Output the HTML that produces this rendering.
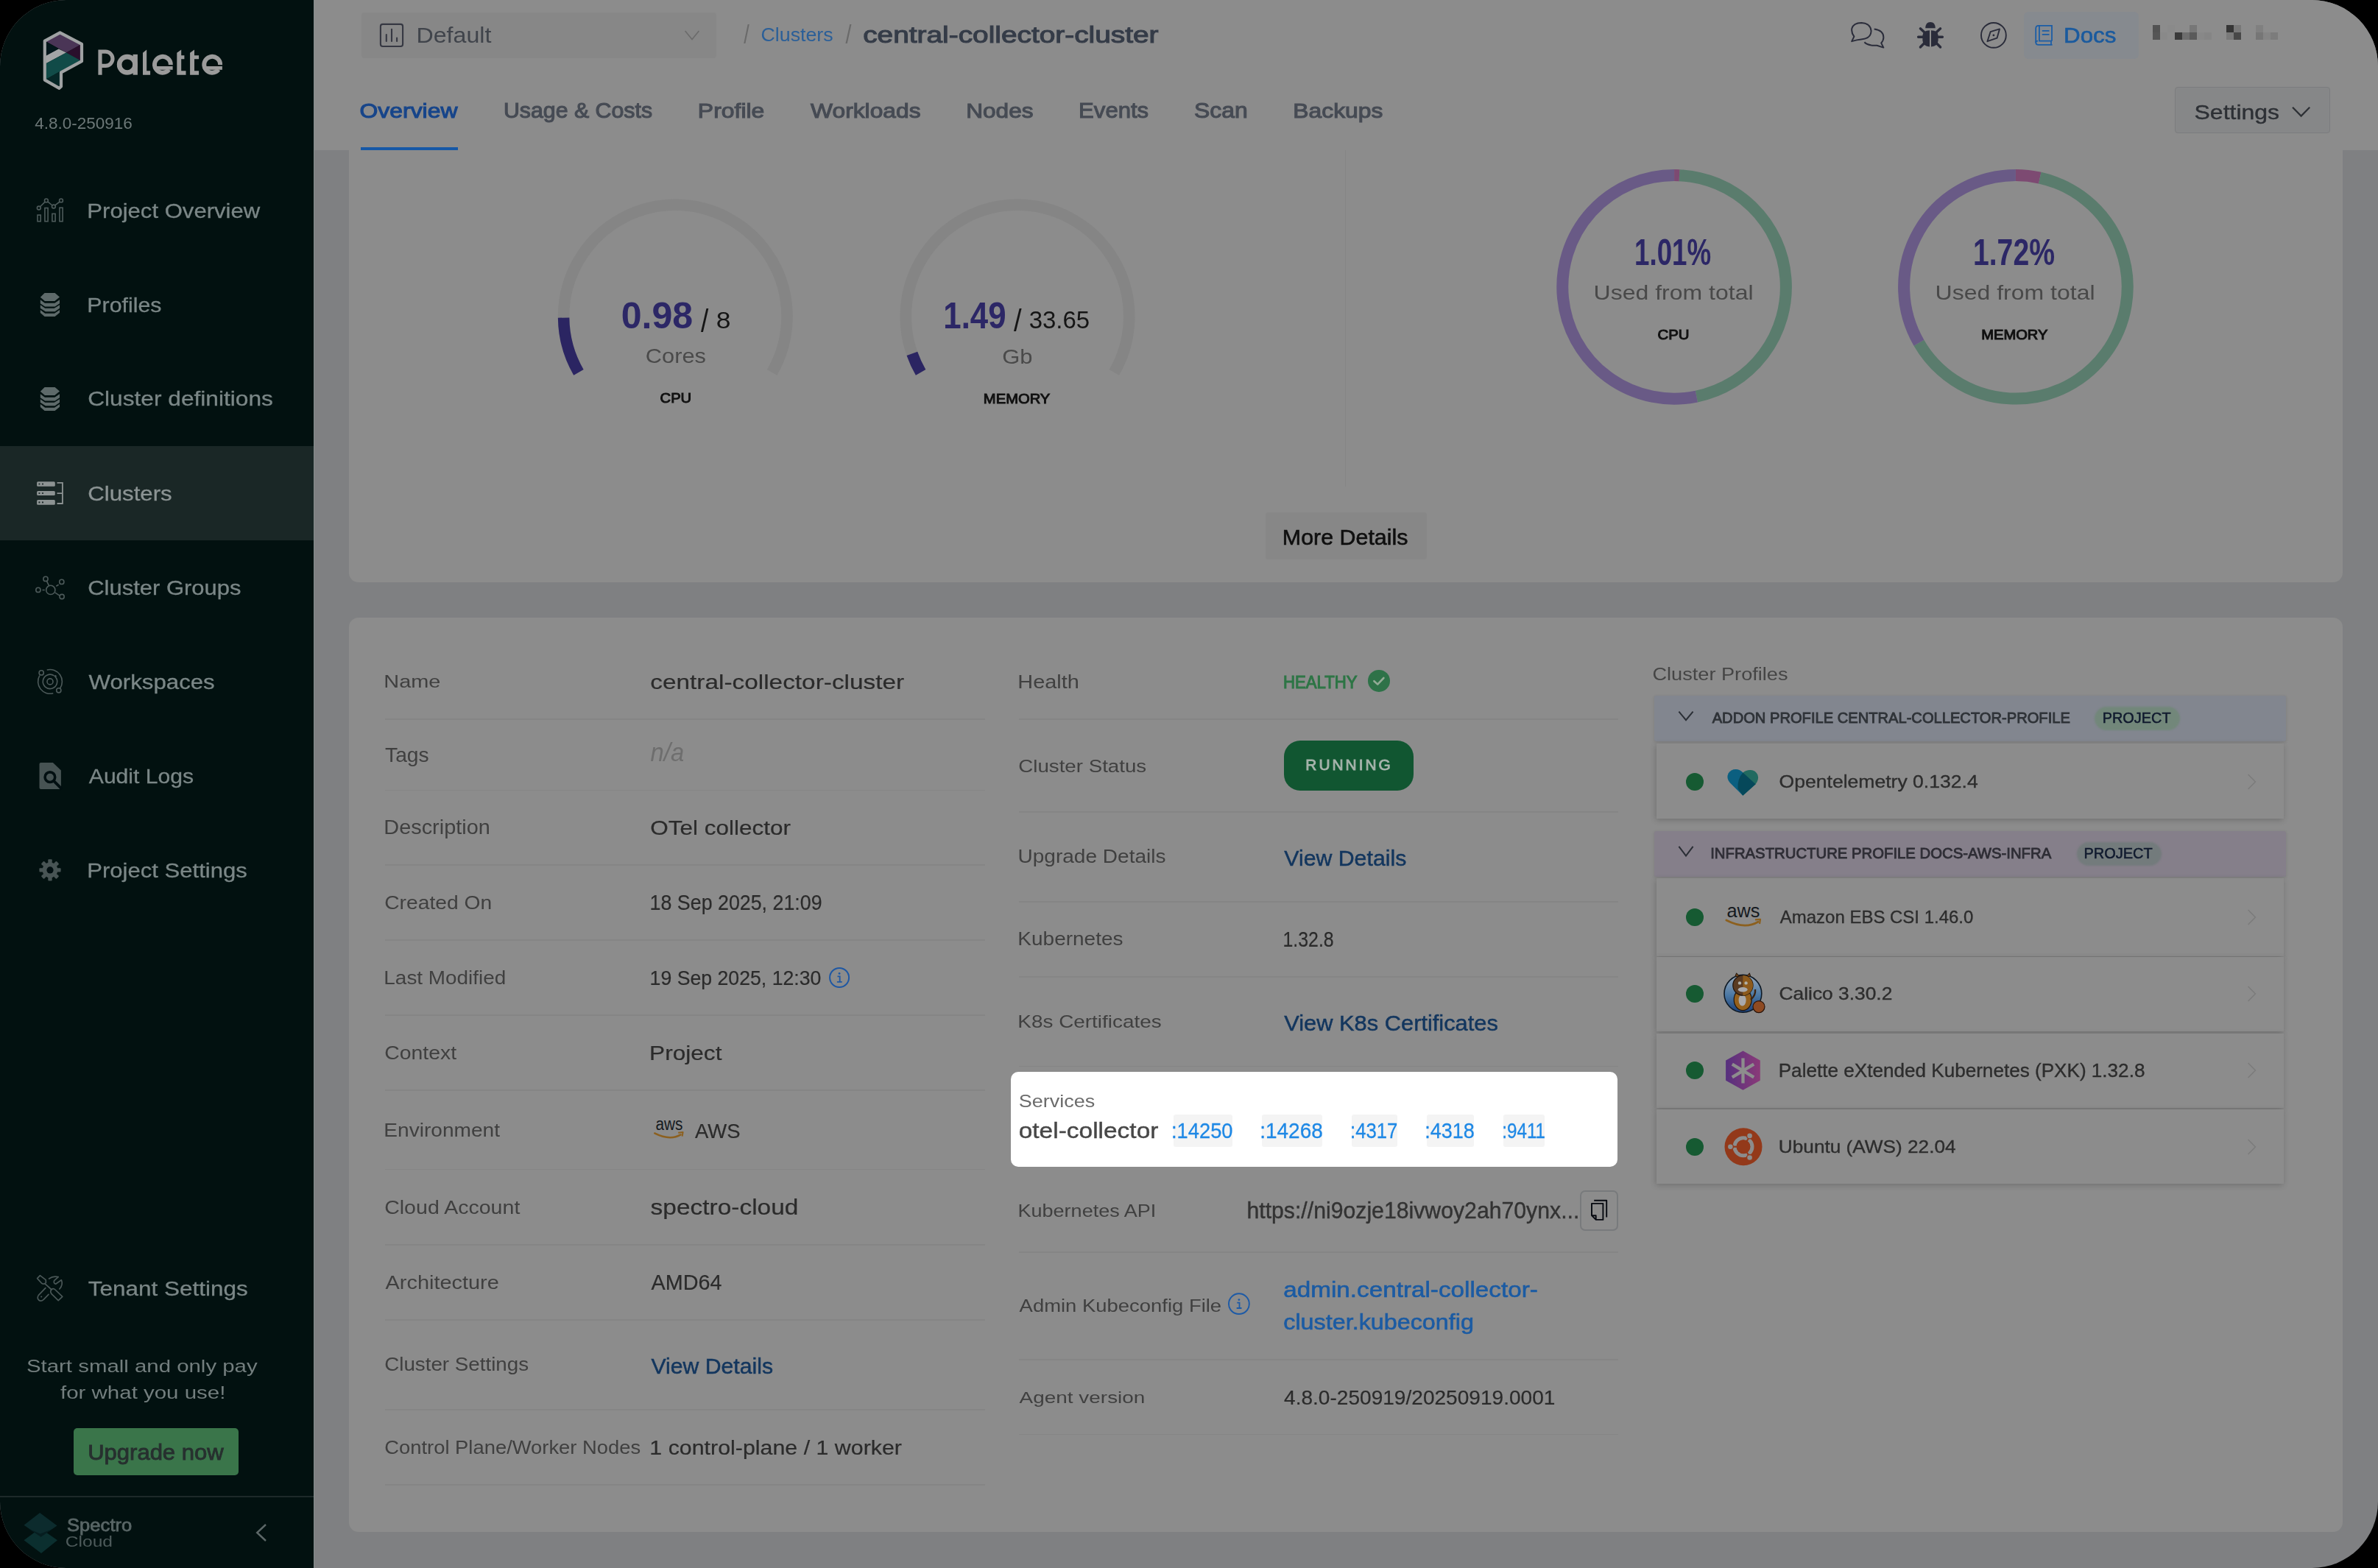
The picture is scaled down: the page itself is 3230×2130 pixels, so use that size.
<!DOCTYPE html>
<html><head><meta charset="utf-8"><title>Palette - central-collector-cluster</title>
<style>
html,body{margin:0;padding:0;background:#000;width:3230px;height:2130px;overflow:hidden}
*{box-sizing:border-box}
#app{position:absolute;left:0;top:0;width:3230px;height:2130px;border-radius:90px;overflow:hidden;background:#7f8082;font-family:"Liberation Sans",sans-serif}
.a{position:absolute}
#sidebar{left:0;top:0;width:426px;height:2130px;background:#021110}
#active{left:0;top:606px;width:426px;height:128px;background:#1a2726}
#sbedge{left:426px;top:0;width:1px;height:2130px;background:#868d8d;z-index:3}
#sep{left:0;top:2032px;width:426px;height:2px;background:#1d2929}
#upgrade{left:100px;top:1940px;width:224px;height:64px;border-radius:5px;background:#3a754a}
#header{left:426px;top:0;width:2804px;height:204px;background:#8c8c8c}
#project{left:491px;top:17px;width:482px;height:62px;border-radius:4px;background:#878787}
#tabline{left:490px;top:200px;width:132px;height:4px;background:#1658a6}
#docs{left:2749px;top:16px;width:156px;height:64px;border-radius:6px;background:#868a8f}
#settings{left:2954px;top:118px;width:211px;height:63px;border-radius:4px;background:#868788;border:1.5px solid #7b7c7e}
#card1{left:474px;top:180px;width:2708px;height:611px;border-radius:0 0 13px 13px;background:#8c8c8c}
#divider{left:1826.5px;top:204px;width:1px;height:457px;background:#858585}
#moredet{left:1718.5px;top:696px;width:219px;height:64px;border-radius:4px;background:#878787}
#card2{left:474px;top:839px;width:2708px;height:1242px;border-radius:13px;background:#8c8c8c}
.ln{position:absolute;height:1.5px;background:#858585}
#services{left:1373px;top:1456px;width:824px;height:128.5px;border-radius:10px;background:#fff}
.port{position:absolute;top:1514px;height:43.5px;background:#f4f4f4;border-radius:3px}
#copy{left:2146px;top:1616.5px;width:51.5px;height:55px;border-radius:7px;border:2px solid #787a7c}
#pill{left:1744px;top:1006px;width:176px;height:68px;border-radius:22px;background:#115631}
.phead{position:absolute;left:2247px;width:858px;height:62px;border-radius:3px;box-shadow:0 1px 4px rgba(0,0,0,0.12)}
.prow{position:absolute;left:2250px;width:852px;background:#8c8c8c;box-shadow:-1px 2px 8px rgba(0,0,0,0.2)}
.pproj{position:absolute;height:32px;border-radius:16px;filter:blur(1.2px)}
.dot{position:absolute;left:2290px;width:24px;height:24px;border-radius:50%;background:#165a32}
svg{position:absolute;left:0;top:0}
</style></head>
<body>
<div id="app">
  <div id="sidebar" class="a"></div>
  <div id="active" class="a"></div>
  <div id="sep" class="a"></div>
  <div id="upgrade" class="a"></div>
  <div id="sbedge" class="a"></div>

  <div id="card1" class="a"></div>
  <div id="header" class="a"></div>
  <div id="project" class="a"></div>
  <div id="tabline" class="a"></div>
  <div id="docs" class="a"></div>
  <div id="settings" class="a"></div>
  <div id="divider" class="a"></div>
  <div id="moredet" class="a"></div>

  <div id="card2" class="a"></div>
  <div class="ln" style="left:523px;top:976.25px;width:815px"></div>
<div class="ln" style="left:523px;top:1072.55px;width:815px"></div>
<div class="ln" style="left:523px;top:1174.25px;width:815px"></div>
<div class="ln" style="left:523px;top:1276.25px;width:815px"></div>
<div class="ln" style="left:523px;top:1378.45px;width:815px"></div>
<div class="ln" style="left:523px;top:1480.25px;width:815px"></div>
<div class="ln" style="left:523px;top:1587.95px;width:815px"></div>
<div class="ln" style="left:523px;top:1690.05px;width:815px"></div>
<div class="ln" style="left:523px;top:1792.25px;width:815px"></div>
<div class="ln" style="left:523px;top:1914.25px;width:815px"></div>
<div class="ln" style="left:523px;top:2016.25px;width:815px"></div>
<div class="ln" style="left:1384px;top:976.25px;width:814px"></div>
<div class="ln" style="left:1384px;top:1102.45px;width:814px"></div>
<div class="ln" style="left:1384px;top:1224.25px;width:814px"></div>
<div class="ln" style="left:1384px;top:1326.25px;width:814px"></div>
<div class="ln" style="left:1384px;top:1447.55px;width:814px"></div>
<div class="ln" style="left:1384px;top:1700.05px;width:814px"></div>
<div class="ln" style="left:1384px;top:1846.25px;width:814px"></div>
<div class="ln" style="left:1384px;top:1947.95px;width:814px"></div>
  <div id="pill" class="a"></div>

  <div class="phead" style="top:945px;background:#82868f"></div>
  <div class="pproj" style="left:2844.5px;top:959.5px;width:116px;background:#72877a"></div>
  <div class="prow" style="top:1009.5px;height:102px"></div>
  <div class="phead" style="top:1128.5px;background:#857f8a"></div>
  <div class="pproj" style="left:2820.5px;top:1143.5px;width:115px;background:#737b7c"></div>
  <div class="prow" style="top:1192.5px;height:106px"></div>
  <div class="prow" style="top:1300px;height:101px"></div>
  <div class="prow" style="top:1403.5px;height:101.5px"></div>
  <div class="prow" style="top:1507px;height:101px"></div>
  <div class="dot" style="top:1050px"></div>
  <div class="dot" style="top:1234px"></div>
  <div class="dot" style="top:1338px"></div>
  <div class="dot" style="top:1442px"></div>
  <div class="dot" style="top:1546px"></div>

  <div id="services" class="a"></div>
  <div class="port" style="left:1593.5px;width:80px"></div>
  <div class="port" style="left:1713.8px;width:82px"></div>
  <div class="port" style="left:1835.5px;width:62.5px"></div>
  <div class="port" style="left:1937.6px;width:64px"></div>
  <div class="port" style="left:2042.4px;width:55.5px"></div>
  <div id="copy" class="a"></div>

  <svg width="3230" height="2130" viewBox="0 0 3230 2130">
  <path d="M785.92,505.85 A151.7,151.7 0 1 1 1048.68,505.85" fill="none" stroke="#858585" stroke-width="15.5"/>
<path d="M785.92,505.85 A151.7,151.7 0 0 1 765.61,431.59" fill="none" stroke="#2b2562" stroke-width="15.5"/>
<path d="M1250.62,505.85 A151.7,151.7 0 1 1 1513.38,505.85" fill="none" stroke="#858585" stroke-width="15.5"/>
<path d="M1250.62,505.85 A151.7,151.7 0 0 1 1238.89,480.32" fill="none" stroke="#2b2562" stroke-width="15.5"/>
<path d="M2280.99,238.16 A151.8,151.8 0 0 1 2304.36,538.55" fill="none" stroke="#5a7c6d" stroke-width="16"/>
<path d="M2304.36,538.55 A151.8,151.8 0 1 1 2274.10,238.00" fill="none" stroke="#695a86" stroke-width="16"/>
<path d="M2274.10,238.00 A151.8,151.8 0 0 1 2280.99,238.16" fill="none" stroke="#7d4a72" stroke-width="16"/>
<path d="M2737.90,238.00 A151.8,151.8 0 0 1 2770.76,241.60" fill="none" stroke="#7d4a72" stroke-width="16"/>
<path d="M2770.76,241.60 A151.8,151.8 0 1 1 2606.44,465.70" fill="none" stroke="#5a7c6d" stroke-width="16"/>
<path d="M2606.44,465.70 A151.8,151.8 0 0 1 2737.90,238.00" fill="none" stroke="#695a86" stroke-width="16"/>
<g><polygon points="62,56 81.5,46 109,61 90,71.4" fill="#4a3556"/><polygon points="90,71.4 109,61 109,83 " fill="#2a0f2c"/><polygon points="62,57 79.7,66.5 62,76" fill="#03171b"/><polygon points="62,76 79.7,66.5 90,71.4 62,86.5" fill="#a3a5a6"/><polygon points="62,86.5 90,71.4 109,82 82.5,96.5 62,108" fill="#114b48"/><polygon points="62,108 82.5,96.5 82.5,118 " fill="#062626"/><path d="M81.5,44.3 L60.8,55.6 L60.8,108.6 L80.5,119.8 L83,117.5 L83,98.3 L111,83.2 L111,59.8 Z" fill="none" stroke="#9fa2a3" stroke-width="4.2" stroke-linejoin="round"/></g>
<g fill="none" stroke="#4d5a5a" stroke-width="1.6"><rect x="51" y="292.1" width="4.2" height="8.6"/><rect x="60.9" y="282.5" width="4.2" height="18.2"/><rect x="70.9" y="290.4" width="4.2" height="10.3"/><rect x="80.9" y="282.2" width="4.2" height="18.5"/><circle cx="52.8" cy="282.5" r="2.4"/><circle cx="62.9" cy="272.4" r="2.4"/><circle cx="72.9" cy="280.5" r="2.4"/><circle cx="83" cy="272.4" r="2.4"/><path d="M54.5,280.8 L61.2,274.1 M64.8,273.9 L71,279 M74.7,278.9 L81.2,274"/></g>
<g fill="#5e6a6a" transform="translate(0,0)"><polygon points="54.8,403.7 60.6,398 74.6,398 81,403.4 74.3,409.1 60.9,409.1"/><polygon points="54.8,407.2 60.9,411.7 74.3,411.7 81,407.2 81,412.3 74.6,416.5 61.2,416.5 54.8,412.3"/><polygon points="54.8,414.2 61.2,418.7 73.7,418.7 81,414.2 81,418.7 74.6,423.2 61.9,423.2 54.8,418.7"/><polygon points="54.8,420.9 61.2,425.7 74,425.7 81,420.9 81,424.8 74.6,429.9 60.6,429.9 54.8,425.1"/></g>
<g fill="#5e6a6a" transform="translate(0,128)"><polygon points="54.8,403.7 60.6,398 74.6,398 81,403.4 74.3,409.1 60.9,409.1"/><polygon points="54.8,407.2 60.9,411.7 74.3,411.7 81,407.2 81,412.3 74.6,416.5 61.2,416.5 54.8,412.3"/><polygon points="54.8,414.2 61.2,418.7 73.7,418.7 81,414.2 81,418.7 74.6,423.2 61.9,423.2 54.8,418.7"/><polygon points="54.8,420.9 61.2,425.7 74,425.7 81,420.9 81,424.8 74.6,429.9 60.6,429.9 54.8,425.1"/></g>
<g><rect x="50.1" y="654.2" width="24.7" height="6.6" rx="1.5" fill="#8d9393"/><rect x="50.1" y="667" width="24.7" height="5.9" rx="1.5" fill="#8d9393"/><rect x="50.1" y="679.1" width="24.7" height="6.6" rx="1.5" fill="#8d9393"/><g fill="#1a2627"><circle cx="53.4" cy="657.5" r="1.1"/><circle cx="58" cy="657.5" r="1.1"/><circle cx="53.4" cy="670" r="1.1"/><circle cx="58" cy="670" r="1.1"/><circle cx="53.4" cy="682.4" r="1.1"/><circle cx="58" cy="682.4" r="1.1"/></g><path d="M77.5,655.8 H84.9 V684 H77.5 M77.5,670.2 H84.9" fill="none" stroke="#8d9393" stroke-width="1.8"/></g>
<g fill="none" stroke="#4d5a5a" stroke-width="1.6"><circle cx="68.8" cy="801.4" r="6.1"/><circle cx="62" cy="786.4" r="3.1"/><circle cx="83.8" cy="790.4" r="3.1"/><circle cx="51.9" cy="801.4" r="3.1"/><circle cx="84.1" cy="810.5" r="3.1"/><path d="M63.6,789.7 L66.4,795.3 M57.5,801.5 H60.8 M76.3,796.2 L79.6,794.2 M74.6,804.9 L81,809.1"/></g>
<g fill="none" stroke="#4d5a5a" stroke-width="1.6"><path d="M63.76,910.06 A16.4,16.4 0 0 1 81.43,935.31"/><path d="M72.24,941.74 A16.4,16.4 0 0 1 53.80,917.70"/><path d="M75.43,919.66 A9.7,9.7 0 1 1 73.56,917.95"/><circle cx="68" cy="925.9" r="4"/><circle cx="56.2" cy="913.9" r="3.1"/><circle cx="79.8" cy="937.8" r="3.1"/></g><circle cx="75.2" cy="918.5" r="1.6" fill="#4d5a5a"/>
<g><path d="M55.5,1036.1 H71.9 L82.9,1046.5 V1069.9 Q82.9,1071.9 80.9,1071.9 H55.5 Q53.5,1071.9 53.5,1069.9 V1038.1 Q53.5,1036.1 55.5,1036.1 Z" fill="#475353"/><circle cx="67.9" cy="1055.7" r="6.8" fill="none" stroke="#020f11" stroke-width="3.6"/><path d="M72.8,1060.6 L84,1071.8" stroke="#020f11" stroke-width="3.8"/></g>
<g fill="#485454"><rect x="65.30" y="1167.30" width="5.4" height="6.20" rx="1" transform="rotate(0.0 68 1181.9)"/><rect x="65.30" y="1167.30" width="5.4" height="6.20" rx="1" transform="rotate(45.0 68 1181.9)"/><rect x="65.30" y="1167.30" width="5.4" height="6.20" rx="1" transform="rotate(90.0 68 1181.9)"/><rect x="65.30" y="1167.30" width="5.4" height="6.20" rx="1" transform="rotate(135.0 68 1181.9)"/><rect x="65.30" y="1167.30" width="5.4" height="6.20" rx="1" transform="rotate(180.0 68 1181.9)"/><rect x="65.30" y="1167.30" width="5.4" height="6.20" rx="1" transform="rotate(225.0 68 1181.9)"/><rect x="65.30" y="1167.30" width="5.4" height="6.20" rx="1" transform="rotate(270.0 68 1181.9)"/><rect x="65.30" y="1167.30" width="5.4" height="6.20" rx="1" transform="rotate(315.0 68 1181.9)"/><circle cx="68" cy="1181.9" r="10.4"/></g><circle cx="68" cy="1181.9" r="4.6" fill="#020f11"/>
<g fill="none" stroke="#4a5757" stroke-width="1.7" stroke-linejoin="round" stroke-linecap="round"><path d="M50.6,1736.6 L54.4,1732.6 L62.2,1738.6 L62.4,1742.4 Q61,1744.6 58.2,1744 L56.6,1743.2 Z"/><path d="M60.8,1743.6 L70.2,1752"/><path d="M69.8,1751.6 Q72.4,1749.4 75,1752 L84.8,1761.4 L79.2,1766.6 L70,1757.6 Q67.6,1754.6 69.8,1751.6 Z"/><path d="M66.6,1737 Q72,1732.8 79.2,1734.6 L73.6,1739.6 Q72.4,1743.2 75.6,1744.2 L83.4,1738.8 Q86,1745.4 80.8,1751"/><path d="M61.8,1749.6 L52.4,1759.4 Q49.8,1763.4 52.6,1766 Q55.6,1768.6 59.2,1765.4 L66,1758.4"/></g><circle cx="56.2" cy="1761.5" r="1.1" fill="#4a5757"/>
<g><polygon points="32.5,2092.2 54.5,2076 78,2092.2 56,2110" fill="#0b2f2f"/><polygon points="32.5,2071.8 54.1,2055.1 77.5,2072.6 55.6,2087.7" fill="#0c2b2d"/><polygon points="39,2076.8 55.6,2087.7 70.5,2077.5 54.6,2083.4" fill="#061e20"/></g>
<path d="M361,2071 L349.2,2082 L361,2093" fill="none" stroke="#5d6868" stroke-width="2.4"/>
<g fill="none" stroke="#363842" stroke-width="2.1" stroke-linecap="round"><rect x="516.9" y="32.9" width="30.2" height="30.1" rx="3"/><path d="M524.8,47 V56 M532,39.7 V56 M539.1,51.6 V56"/></g>
<path d="M930.6,42 L940,53.6 L949.4,42" fill="none" stroke="#6b6b6b" stroke-width="1.6"/>
<g fill="none" stroke="#2a2c3a" stroke-width="2" stroke-linejoin="round"><path d="M2518.4,49.6 Q2514.3,44 2515.4,38.6 Q2517.4,31 2528.4,30.9 Q2540.6,31.4 2541.6,42 Q2541.4,52.6 2528,53.4 Q2522.6,53.8 2515.2,56.1 Z"/><path d="M2545.7,39.6 Q2558.3,41.2 2558.4,51 Q2558.2,55.4 2555.2,58.4 L2558.3,64.6 L2549.4,61.7 Q2537.4,62.4 2532.4,57.3"/></g>
<g fill="#2a2c3a"><path d="M2615.2,38.3 Q2615.4,29.9 2622,29.9 Q2628.6,29.9 2628.8,38.3 Z"/><path d="M2611.4,48 Q2612,41.2 2621,41.2 L2621,63.4 Q2612.2,63.4 2611.4,55 Z"/><path d="M2632.6,48 Q2632,41.2 2623,41.2 L2623,63.4 Q2631.8,63.4 2632.6,55 Z"/></g><g stroke="#2a2c3a" stroke-width="3.4" stroke-linecap="round"><path d="M2608.4,38.8 L2614,44 M2605.6,50.2 H2611.6 M2608.4,64 L2613.6,58.8 M2635.6,38.8 L2630,44 M2638.4,50.2 H2632.4 M2635.6,64 L2630.4,58.8"/></g>
<g fill="none" stroke="#2a2c3a" stroke-width="1.9" stroke-linejoin="round"><circle cx="2707.9" cy="47.9" r="16.9"/><path d="M2716,39.4 L2712.6,51.6 L2699.4,56.2 L2703.6,43.2 Z"/></g><circle cx="2707.9" cy="47.9" r="1.4" fill="#2a2c3a"/>
<g fill="none" stroke="#1b5da6" stroke-width="1.8"><path d="M2787,55.7 V34.8 H2769 Q2765.2,34.8 2765.2,38.6 V57.2 Q2765.2,60.9 2769,60.9 H2787.6"/><path d="M2769.9,34.8 V55.7 H2787 M2765.2,57.8 Q2765.2,55.7 2768,55.7 M2786,55.7 V60.9"/><path d="M2773.8,41.8 H2783.5 M2773.8,46.9 H2783.5"/></g>
<g><rect x="2924" y="34" width="10" height="10" fill="#525252"/><rect x="2944" y="34" width="10" height="10" fill="#8a8a8a"/><rect x="2974" y="34" width="10" height="10" fill="#777777"/><rect x="3024" y="34" width="10" height="10" fill="#363636"/><rect x="3034" y="34" width="10" height="10" fill="#787878"/><rect x="3064" y="34" width="10" height="10" fill="#808080"/><rect x="2924" y="44" width="10" height="10" fill="#555555"/><rect x="2934" y="44" width="10" height="10" fill="#898989"/><rect x="2954" y="44" width="10" height="10" fill="#3a3a3a"/><rect x="2964" y="44" width="10" height="10" fill="#6e6e6e"/><rect x="2974" y="44" width="10" height="10" fill="#5a5a5a"/><rect x="2984" y="44" width="10" height="10" fill="#888888"/><rect x="2994" y="44" width="10" height="10" fill="#858585"/><rect x="3024" y="44" width="10" height="10" fill="#7a7a7a"/><rect x="3034" y="44" width="10" height="10" fill="#484848"/><rect x="3064" y="44" width="10" height="10" fill="#767676"/><rect x="3074" y="44" width="10" height="10" fill="#858585"/><rect x="3084" y="44" width="10" height="10" fill="#7c7c7c"/></g>
<path d="M3114,145.8 L3125.6,157.6 L3137.2,145.8" fill="none" stroke="#2d3035" stroke-width="2.3"/>
<g><circle cx="1140.1" cy="1328" r="13" fill="none" stroke="#1e57a3" stroke-width="2"/><circle cx="1140.1" cy="1322.4" r="1.4" fill="#1e57a3"/><path d="M1137.5,1326.4 H1140.6999999999998 V1333.6 M1136.8999999999999,1333.8 H1143.6999999999998" fill="none" stroke="#1e57a3" stroke-width="1.8"/></g>
<g><circle cx="1682.9" cy="1771.2" r="13.9" fill="none" stroke="#1d5aa6" stroke-width="2"/><circle cx="1682.9" cy="1765.6000000000001" r="1.4" fill="#1d5aa6"/><path d="M1680.3000000000002,1769.6000000000001 H1683.5 V1776.8 M1679.7,1777.0 H1686.5" fill="none" stroke="#1d5aa6" stroke-width="1.8"/></g>
<text x="890.4" y="1535.2" font-family="Liberation Sans" font-size="24.15" textLength="37" lengthAdjust="spacingAndGlyphs" fill="#151a1f">aws</text>
<path d="M889.2,1539.4 Q910,1550 924.6,1541.4" fill="none" stroke="#8c601f" stroke-width="2.4" stroke-linecap="round"/><path d="M921.2,1538.8 L927.6,1538 L926.6,1543.6" fill="none" stroke="#8c601f" stroke-width="2" stroke-linejoin="round"/>
<text x="2345.4" y="1246.2" font-family="Liberation Sans" font-size="25.85" textLength="45" lengthAdjust="spacingAndGlyphs" fill="#151a1f">aws</text>
<path d="M2344.8,1250 Q2370,1263 2388,1252.2" fill="none" stroke="#8c601f" stroke-width="2.8" stroke-linecap="round"/><path d="M2384,1249.4 L2391,1248.8 L2390,1255" fill="none" stroke="#8c601f" stroke-width="2.2" stroke-linejoin="round"/>
<circle cx="1873" cy="924.9" r="15" fill="#2e7248"/><path d="M1866.4,925.2 L1871.2,929.6 L1879.4,921" fill="none" stroke="#93aa96" stroke-width="2.6" stroke-linecap="round" stroke-linejoin="round"/>
<g fill="none" stroke="#060910" stroke-width="1.9" stroke-linejoin="round"><path d="M2165.2,1630.8 H2182.2 V1653.6"/><path d="M2162,1634.9 H2177.4 V1656.9 H2167.7 L2162,1651.2 Z M2162,1651.2 H2167.7 V1656.9"/></g>
<path d="M2280.4,966.6 L2290,978.2 L2299.6,966.6" fill="none" stroke="#2a2e35" stroke-width="2"/>
<path d="M2280.4,1149.8 L2290,1162.6 L2299.6,1149.8" fill="none" stroke="#2a2e35" stroke-width="2"/>
<path d="M3053.6,1052 L3063.4,1062 L3053.6,1072" fill="none" stroke="#7b7b7b" stroke-width="1.5"/>
<path d="M3053.6,1236 L3063.4,1246 L3053.6,1256" fill="none" stroke="#7b7b7b" stroke-width="1.5"/>
<path d="M3053.6,1340 L3063.4,1350 L3053.6,1360" fill="none" stroke="#7b7b7b" stroke-width="1.5"/>
<path d="M3053.6,1444 L3063.4,1454 L3053.6,1464" fill="none" stroke="#7b7b7b" stroke-width="1.5"/>
<path d="M3053.6,1548 L3063.4,1558 L3053.6,1568" fill="none" stroke="#7b7b7b" stroke-width="1.5"/>
<g><path d="M2367.3,1080.8 L2349.5,1063 Q2344.5,1057 2347.6,1050.6 Q2351,1045 2357.6,1045 Q2363.6,1045.2 2367.5,1049.6 L2367.3,1080.8 Z" fill="#0b5f80"/><path d="M2367.5,1049.6 Q2371.4,1045.8 2377.8,1046 Q2384.6,1046.4 2387.4,1052.6 Q2389.6,1058.8 2384.6,1065.2 L2367.3,1080.8 Z" fill="#226a60"/><path d="M2367.4,1049.6 L2384.6,1065.2 L2367.3,1080.8 L2360.5,1071.6 Q2359.6,1058 2367.4,1049.6 Z" fill="#06485a"/></g>
<defs><linearGradient id="calg" x1="0" y1="0" x2="0" y2="1"><stop offset="0" stop-color="#9aa8b8"/><stop offset="0.55" stop-color="#4a78a4"/><stop offset="1" stop-color="#1b3f78"/></linearGradient><linearGradient id="pxkg" x1="0" y1="0" x2="1" y2="0"><stop offset="0" stop-color="#56307e"/><stop offset="1" stop-color="#8a3a78"/></linearGradient></defs>
<g><circle cx="2367.4" cy="1349.8" r="25.4" fill="url(#calg)" stroke="#0e1a26" stroke-width="1.6"/><path d="M2357,1326 L2358.6,1321.8 L2364,1328 Z M2377.6,1326 L2376.4,1321.8 L2371,1328 Z" fill="#6e4218" stroke="#20140c" stroke-width="1"/><ellipse cx="2367.2" cy="1358" rx="12" ry="14.6" fill="#95601c" stroke="#20140c" stroke-width="1.2"/><ellipse cx="2366.6" cy="1358.6" rx="5" ry="8" fill="#a9a9ab"/><circle cx="2367.4" cy="1338.6" r="13.6" fill="#5a3b22" stroke="#20140c" stroke-width="1.2"/><path d="M2367.4,1325 A13.6,13.6 0 0 1 2367.4,1352.2 Z" fill="#8c5a1c"/><circle cx="2363" cy="1335.4" r="2.2" fill="#b0b0a8"/><circle cx="2371.6" cy="1335.4" r="2.2" fill="#b0b0a8"/><ellipse cx="2367.2" cy="1344.2" rx="6.4" ry="3.2" fill="#a8a8aa"/><path d="M2378,1358 Q2385,1352 2384,1344" fill="none" stroke="#3a2414" stroke-width="2.4"/><circle cx="2389" cy="1367.6" r="8" fill="#8e4a22" stroke="#2a140a" stroke-width="1.2"/></g>
<g><polygon points="2367.5,1427.6 2390.8,1440.6 2390.8,1467.7 2367.5,1480.7 2344.1,1467.7 2344.1,1440.6" fill="url(#pxkg)"/><g stroke="#8d8d8d" stroke-width="4.3"><path d="M2367.5,1437.4 V1471.5"/><path d="M2352.8,1445.6 L2382.2,1463.3"/><path d="M2352.8,1463.3 L2382.2,1445.6"/></g></g>
<g><circle cx="2368" cy="1557.7" r="25.5" fill="#93391a"/><circle cx="2368" cy="1557.7" r="12" fill="none" stroke="#8c8c8c" stroke-width="5"/><g stroke="#93391a" stroke-width="2.2"><path d="M2368,1557.7 L2352,1557.7"/><path d="M2368,1557.7 L2376.5,1544"/><path d="M2368,1557.7 L2376.5,1571.5"/></g><circle cx="2368" cy="1557.7" r="9.2" fill="#93391a"/><g fill="#8c8c8c" stroke="#93391a" stroke-width="1.4"><circle cx="2350.4" cy="1557.7" r="4"/><circle cx="2376.6" cy="1542.9" r="4"/><circle cx="2376.6" cy="1572.5" r="4"/></g></g>
<g fill="#9b9b9b" stroke="none"><path d="M136,101.7 V70.2 H143.4 A9.6,9.6 0 0 1 143.4,89.4 H136" fill="none" stroke="#9b9b9b" stroke-width="5.2"/><circle cx="172.8" cy="87.8" r="10.7" fill="none" stroke="#9b9b9b" stroke-width="6.6"/><rect x="180.6" y="73.9" width="6.3" height="27.8"/><polygon points="194,71.8 199.2,67.6 199.2,96.2 204.1,96.2 204.1,101.7 194,101.7"/><path d="M229.49,94.51 A10.9,10.9 0 1 1 231.79,88.18" fill="none" stroke="#9b9b9b" stroke-width="6"/><rect x="212" y="90" width="22.6" height="4.8"/><polygon points="240.3,71.8 246.2,67.6 246.2,75.2 250.4,75.2 250.4,80.2 246.2,80.2 246.2,96.2 252.5,96.2 252.5,101.7 240.3,101.7"/><polygon points="258.1,71.8 264,67.6 264,75.2 270.1,75.2 270.1,80.2 264,80.2 264,96.2 270.1,96.2 270.1,101.7 258.1,101.7"/><path d="M296.79,94.51 A10.9,10.9 0 1 1 299.09,88.18" fill="none" stroke="#9b9b9b" stroke-width="6"/><rect x="279.3" y="90" width="22.6" height="4.8"/></g>
  </svg>
  <svg width="3230" height="2130" viewBox="0 0 3230 2130" style="font-family:'Liberation Sans',sans-serif;will-change:transform">
  <text x="47.35" y="174.50" font-size="22.43" textLength="132.43" lengthAdjust="spacingAndGlyphs" fill="#6d7878" font-weight="normal" font-style="normal">4.8.0-250916</text>
<text x="118.31" y="295.80" font-size="27.86" textLength="234.92" lengthAdjust="spacingAndGlyphs" fill="#7b8787" font-weight="normal" font-style="normal" stroke="#7b8787" stroke-width="0.3">Project Overview</text>
<text x="118.38" y="423.60" font-size="27.86" textLength="101.07" lengthAdjust="spacingAndGlyphs" fill="#7b8787" font-weight="normal" font-style="normal" stroke="#7b8787" stroke-width="0.3">Profiles</text>
<text x="119.22" y="551.40" font-size="27.86" textLength="251.64" lengthAdjust="spacingAndGlyphs" fill="#7b8787" font-weight="normal" font-style="normal" stroke="#7b8787" stroke-width="0.3">Cluster definitions</text>
<text x="119.24" y="680.00" font-size="27.86" textLength="114.48" lengthAdjust="spacingAndGlyphs" fill="#8c9494" font-weight="normal" font-style="normal" stroke="#8c9494" stroke-width="0.3">Clusters</text>
<text x="119.25" y="808.20" font-size="28.41" textLength="208.22" lengthAdjust="spacingAndGlyphs" fill="#7b8787" font-weight="normal" font-style="normal" stroke="#7b8787" stroke-width="0.3">Cluster Groups</text>
<text x="120.64" y="935.80" font-size="27.72" textLength="171.10" lengthAdjust="spacingAndGlyphs" fill="#7b8787" font-weight="normal" font-style="normal" stroke="#7b8787" stroke-width="0.3">Workspaces</text>
<text x="120.80" y="1064.00" font-size="27.59" textLength="142.27" lengthAdjust="spacingAndGlyphs" fill="#7b8787" font-weight="normal" font-style="normal" stroke="#7b8787" stroke-width="0.3">Audit Logs</text>
<text x="118.32" y="1192.00" font-size="28.55" textLength="217.43" lengthAdjust="spacingAndGlyphs" fill="#7b8787" font-weight="normal" font-style="normal" stroke="#7b8787" stroke-width="0.3">Project Settings</text>
<text x="119.67" y="1760.30" font-size="28.14" textLength="216.99" lengthAdjust="spacingAndGlyphs" fill="#7b8787" font-weight="normal" font-style="normal" stroke="#7b8787" stroke-width="0.3">Tenant Settings</text>
<text x="35.98" y="1864.10" font-size="23.86" textLength="313.68" lengthAdjust="spacingAndGlyphs" fill="#737e7e" font-weight="normal" font-style="normal">Start small and only pay</text>
<text x="82.06" y="1899.80" font-size="24.55" textLength="224.30" lengthAdjust="spacingAndGlyphs" fill="#737e7e" font-weight="normal" font-style="normal">for what you use!</text>
<text x="119.17" y="1983.30" font-size="29.66" textLength="184.48" lengthAdjust="spacingAndGlyphs" fill="#27302f" font-weight="normal" font-style="normal" stroke="#27302f" stroke-width="0.9">Upgrade now</text>
<text x="91.05" y="2079.70" font-size="23.86" textLength="88.21" lengthAdjust="spacingAndGlyphs" fill="#596666" font-weight="normal" font-style="normal" stroke="#596666" stroke-width="0.8">Spectro</text>
<text x="88.77" y="2100.60" font-size="21.10" textLength="64.30" lengthAdjust="spacingAndGlyphs" fill="#4d5a5a" font-weight="normal" font-style="normal">Cloud</text>
<text x="565.42" y="58.40" font-size="28.97" textLength="102.05" lengthAdjust="spacingAndGlyphs" fill="#40444b" font-weight="normal" font-style="normal">Default</text>
<text x="1010.20" y="59.20" font-size="35.86" textLength="7.54" lengthAdjust="spacingAndGlyphs" fill="#6a6a6a" font-weight="normal" font-style="normal">/</text>
<text x="1033.56" y="56.20" font-size="25.38" textLength="98.11" lengthAdjust="spacingAndGlyphs" fill="#2b5f98" font-weight="normal" font-style="normal">Clusters</text>
<text x="1148.50" y="59.20" font-size="35.86" textLength="7.94" lengthAdjust="spacingAndGlyphs" fill="#6a6a6a" font-weight="normal" font-style="normal">/</text>
<text x="1172.15" y="57.90" font-size="32.00" textLength="401.41" lengthAdjust="spacingAndGlyphs" fill="#353c48" font-weight="normal" font-style="normal" stroke="#353c48" stroke-width="1.1">central-collector-cluster</text>
<text x="488.57" y="159.90" font-size="28.41" textLength="132.86" lengthAdjust="spacingAndGlyphs" fill="#17458a" font-weight="normal" font-style="normal" stroke="#17458a" stroke-width="1.1">Overview</text>
<text x="683.93" y="159.90" font-size="29.43" textLength="202.12" lengthAdjust="spacingAndGlyphs" fill="#464b54" font-weight="normal" font-style="normal" stroke="#464b54" stroke-width="1.1">Usage &amp; Costs</text>
<text x="947.85" y="159.90" font-size="28.41" textLength="90.48" lengthAdjust="spacingAndGlyphs" fill="#464b54" font-weight="normal" font-style="normal" stroke="#464b54" stroke-width="1.1">Profile</text>
<text x="1101.14" y="159.90" font-size="28.41" textLength="149.39" lengthAdjust="spacingAndGlyphs" fill="#464b54" font-weight="normal" font-style="normal" stroke="#464b54" stroke-width="1.1">Workloads</text>
<text x="1312.17" y="159.90" font-size="28.41" textLength="91.36" lengthAdjust="spacingAndGlyphs" fill="#464b54" font-weight="normal" font-style="normal" stroke="#464b54" stroke-width="1.1">Nodes</text>
<text x="1465.11" y="159.90" font-size="29.86" textLength="95.04" lengthAdjust="spacingAndGlyphs" fill="#464b54" font-weight="normal" font-style="normal" stroke="#464b54" stroke-width="1.1">Events</text>
<text x="1622.06" y="159.90" font-size="29.43" textLength="72.79" lengthAdjust="spacingAndGlyphs" fill="#464b54" font-weight="normal" font-style="normal" stroke="#464b54" stroke-width="1.1">Scan</text>
<text x="1756.36" y="159.90" font-size="28.41" textLength="121.97" lengthAdjust="spacingAndGlyphs" fill="#464b54" font-weight="normal" font-style="normal" stroke="#464b54" stroke-width="1.1">Backups</text>
<text x="2802.99" y="57.90" font-size="28.84" textLength="71.46" lengthAdjust="spacingAndGlyphs" fill="#1a5a9e" font-weight="normal" font-style="normal" stroke="#1a5a9e" stroke-width="0.6">Docs</text>
<text x="2980.56" y="161.50" font-size="27.86" textLength="115.50" lengthAdjust="spacingAndGlyphs" fill="#2d3035" font-weight="normal" font-style="normal" stroke="#2d3035" stroke-width="0.4">Settings</text>
<text x="843.70" y="445.90" font-size="49.57" textLength="97.47" lengthAdjust="spacingAndGlyphs" fill="#2c2766" font-weight="bold" font-style="normal">0.98</text>
<text x="952.00" y="451.00" font-size="44.14" textLength="10.32" lengthAdjust="spacingAndGlyphs" fill="#151515" font-weight="normal" font-style="normal">/</text>
<text x="972.70" y="446.00" font-size="32.14" textLength="19.76" lengthAdjust="spacingAndGlyphs" fill="#151515" font-weight="normal" font-style="normal">8</text>
<text x="876.86" y="493.30" font-size="26.86" textLength="82.14" lengthAdjust="spacingAndGlyphs" fill="#4a4a4a" font-weight="normal" font-style="normal">Cores</text>
<text x="896.59" y="547.30" font-size="19.00" textLength="42.55" lengthAdjust="spacingAndGlyphs" fill="#111111" font-weight="normal" font-style="normal" stroke="#111111" stroke-width="1.0">CPU</text>
<text x="1281.37" y="446.20" font-size="50.29" textLength="85.22" lengthAdjust="spacingAndGlyphs" fill="#2c2766" font-weight="bold" font-style="normal">1.49</text>
<text x="1377.00" y="450.40" font-size="42.34" textLength="10.62" lengthAdjust="spacingAndGlyphs" fill="#151515" font-weight="normal" font-style="normal">/</text>
<text x="1397.68" y="445.90" font-size="32.57" textLength="82.52" lengthAdjust="spacingAndGlyphs" fill="#151515" font-weight="normal" font-style="normal">33.65</text>
<text x="1361.15" y="493.50" font-size="27.03" textLength="41.36" lengthAdjust="spacingAndGlyphs" fill="#4a4a4a" font-weight="normal" font-style="normal">Gb</text>
<text x="1335.89" y="547.70" font-size="19.00" textLength="90.46" lengthAdjust="spacingAndGlyphs" fill="#111111" font-weight="normal" font-style="normal" stroke="#111111" stroke-width="1.0">MEMORY</text>
<text x="2220.10" y="360.10" font-size="50.14" textLength="104.04" lengthAdjust="spacingAndGlyphs" fill="#2c2766" font-weight="bold" font-style="normal">1.01%</text>
<text x="2164.60" y="407.40" font-size="28.28" textLength="216.99" lengthAdjust="spacingAndGlyphs" fill="#494949" font-weight="normal" font-style="normal">Used from total</text>
<text x="2251.48" y="461.20" font-size="18.43" textLength="43.08" lengthAdjust="spacingAndGlyphs" fill="#111111" font-weight="normal" font-style="normal" stroke="#111111" stroke-width="1.0">CPU</text>
<text x="2679.95" y="360.10" font-size="50.14" textLength="111.05" lengthAdjust="spacingAndGlyphs" fill="#2c2766" font-weight="bold" font-style="normal">1.72%</text>
<text x="2628.60" y="407.40" font-size="28.28" textLength="216.99" lengthAdjust="spacingAndGlyphs" fill="#494949" font-weight="normal" font-style="normal">Used from total</text>
<text x="2691.19" y="461.20" font-size="18.43" textLength="90.26" lengthAdjust="spacingAndGlyphs" fill="#111111" font-weight="normal" font-style="normal" stroke="#111111" stroke-width="1.0">MEMORY</text>
<text x="1741.87" y="739.90" font-size="29.38" textLength="170.63" lengthAdjust="spacingAndGlyphs" fill="#0f0f0f" font-weight="normal" font-style="normal" stroke="#0f0f0f" stroke-width="0.6">More Details</text>
<text x="521.29" y="934.00" font-size="24.64" textLength="77.09" lengthAdjust="spacingAndGlyphs" fill="#404040" font-weight="normal" font-style="normal">Name</text>
<text x="523.04" y="1035.00" font-size="27.54" textLength="59.62" lengthAdjust="spacingAndGlyphs" fill="#404040" font-weight="normal" font-style="normal">Tags</text>
<text x="521.29" y="1133.20" font-size="27.03" textLength="144.55" lengthAdjust="spacingAndGlyphs" fill="#404040" font-weight="normal" font-style="normal">Description</text>
<text x="522.19" y="1235.00" font-size="25.66" textLength="146.04" lengthAdjust="spacingAndGlyphs" fill="#404040" font-weight="normal" font-style="normal">Created On</text>
<text x="521.37" y="1336.80" font-size="25.66" textLength="165.93" lengthAdjust="spacingAndGlyphs" fill="#404040" font-weight="normal" font-style="normal">Last Modified</text>
<text x="522.18" y="1438.60" font-size="25.57" textLength="98.00" lengthAdjust="spacingAndGlyphs" fill="#404040" font-weight="normal" font-style="normal">Context</text>
<text x="521.35" y="1544.30" font-size="25.24" textLength="157.70" lengthAdjust="spacingAndGlyphs" fill="#404040" font-weight="normal" font-style="normal">Environment</text>
<text x="522.17" y="1648.70" font-size="25.79" textLength="184.18" lengthAdjust="spacingAndGlyphs" fill="#404040" font-weight="normal" font-style="normal">Cloud Account</text>
<text x="523.60" y="1750.60" font-size="26.07" textLength="154.12" lengthAdjust="spacingAndGlyphs" fill="#404040" font-weight="normal" font-style="normal">Architecture</text>
<text x="522.21" y="1862.00" font-size="25.52" textLength="195.92" lengthAdjust="spacingAndGlyphs" fill="#404040" font-weight="normal" font-style="normal">Cluster Settings</text>
<text x="522.23" y="1974.70" font-size="26.62" textLength="348.02" lengthAdjust="spacingAndGlyphs" fill="#404040" font-weight="normal" font-style="normal">Control Plane/Worker Nodes</text>
<text x="883.27" y="936.10" font-size="28.41" textLength="344.90" lengthAdjust="spacingAndGlyphs" fill="#2b2b2b" font-weight="normal" font-style="normal" stroke="#2b2b2b" stroke-width="0.2">central-collector-cluster</text>
<text x="883.61" y="1033.80" font-size="34.48" textLength="45.54" lengthAdjust="spacingAndGlyphs" fill="#6e6e6e" font-weight="normal" font-style="italic">n/a</text>
<text x="883.18" y="1133.60" font-size="27.72" textLength="190.88" lengthAdjust="spacingAndGlyphs" fill="#2b2b2b" font-weight="normal" font-style="normal" stroke="#2b2b2b" stroke-width="0.2">OTel collector</text>
<text x="882.59" y="1236.10" font-size="29.00" textLength="234.02" lengthAdjust="spacingAndGlyphs" fill="#2b2b2b" font-weight="normal" font-style="normal" stroke="#2b2b2b" stroke-width="0.2">18 Sep 2025, 21:09</text>
<text x="882.60" y="1338.10" font-size="28.29" textLength="232.84" lengthAdjust="spacingAndGlyphs" fill="#2b2b2b" font-weight="normal" font-style="normal" stroke="#2b2b2b" stroke-width="0.2">19 Sep 2025, 12:30</text>
<text x="882.07" y="1439.70" font-size="27.31" textLength="98.36" lengthAdjust="spacingAndGlyphs" fill="#2b2b2b" font-weight="normal" font-style="normal" stroke="#2b2b2b" stroke-width="0.2">Project</text>
<text x="944.00" y="1546.10" font-size="27.71" textLength="61.56" lengthAdjust="spacingAndGlyphs" fill="#2b2b2b" font-weight="normal" font-style="normal" stroke="#2b2b2b" stroke-width="0.2">AWS</text>
<text x="883.60" y="1650.20" font-size="29.10" textLength="200.78" lengthAdjust="spacingAndGlyphs" fill="#2b2b2b" font-weight="normal" font-style="normal" stroke="#2b2b2b" stroke-width="0.2">spectro-cloud</text>
<text x="884.60" y="1751.70" font-size="28.71" textLength="95.95" lengthAdjust="spacingAndGlyphs" fill="#2b2b2b" font-weight="normal" font-style="normal" stroke="#2b2b2b" stroke-width="0.2">AMD64</text>
<text x="884.45" y="1866.10" font-size="29.10" textLength="165.58" lengthAdjust="spacingAndGlyphs" fill="#13365e" font-weight="normal" font-style="normal" stroke="#13365e" stroke-width="0.5">View Details</text>
<text x="882.32" y="1975.80" font-size="27.31" textLength="342.64" lengthAdjust="spacingAndGlyphs" fill="#2b2b2b" font-weight="normal" font-style="normal" stroke="#2b2b2b" stroke-width="0.2">1 control-plane / 1 worker</text>
<text x="1382.29" y="934.90" font-size="25.38" textLength="83.51" lengthAdjust="spacingAndGlyphs" fill="#404040" font-weight="normal" font-style="normal">Health</text>
<text x="1383.22" y="1048.50" font-size="23.72" textLength="173.97" lengthAdjust="spacingAndGlyphs" fill="#404040" font-weight="normal" font-style="normal">Cluster Status</text>
<text x="1382.50" y="1172.40" font-size="25.10" textLength="201.00" lengthAdjust="spacingAndGlyphs" fill="#404040" font-weight="normal" font-style="normal">Upgrade Details</text>
<text x="1382.36" y="1284.30" font-size="25.24" textLength="143.12" lengthAdjust="spacingAndGlyphs" fill="#404040" font-weight="normal" font-style="normal">Kubernetes</text>
<text x="1382.37" y="1396.10" font-size="24.28" textLength="195.24" lengthAdjust="spacingAndGlyphs" fill="#404040" font-weight="normal" font-style="normal">K8s Certificates</text>
<text x="1382.44" y="1652.50" font-size="24.41" textLength="187.92" lengthAdjust="spacingAndGlyphs" fill="#404040" font-weight="normal" font-style="normal">Kubernetes API</text>
<text x="1384.60" y="1782.30" font-size="24.41" textLength="274.55" lengthAdjust="spacingAndGlyphs" fill="#404040" font-weight="normal" font-style="normal">Admin Kubeconfig File</text>
<text x="1384.60" y="1906.20" font-size="22.76" textLength="170.81" lengthAdjust="spacingAndGlyphs" fill="#404040" font-weight="normal" font-style="normal">Agent version</text>
<text x="1742.93" y="934.70" font-size="24.49" textLength="100.69" lengthAdjust="spacingAndGlyphs" fill="#2d7545" font-weight="normal" font-style="normal" stroke="#2d7545" stroke-width="1.1">HEALTHY</text>
<text x="1773.33" y="1046.40" font-size="20.86" textLength="115.46" lengthAdjust="spacing" fill="#a7b4ac" font-weight="normal" font-style="normal" stroke="#a7b4ac" stroke-width="0.9">RUNNING</text>
<text x="1744.25" y="1176.20" font-size="30.34" textLength="166.08" lengthAdjust="spacingAndGlyphs" fill="#13365e" font-weight="normal" font-style="normal" stroke="#13365e" stroke-width="0.5">View Details</text>
<text x="1742.53" y="1286.00" font-size="28.57" textLength="69.17" lengthAdjust="spacingAndGlyphs" fill="#2b2b2b" font-weight="normal" font-style="normal" stroke="#2b2b2b" stroke-width="0.2">1.32.8</text>
<text x="1744.25" y="1400.00" font-size="29.66" textLength="290.63" lengthAdjust="spacingAndGlyphs" fill="#13365e" font-weight="normal" font-style="normal" stroke="#13365e" stroke-width="0.5">View K8s Certificates</text>
<text x="1383.78" y="1503.80" font-size="23.72" textLength="103.55" lengthAdjust="spacingAndGlyphs" fill="#6b6b6b" font-weight="normal" font-style="normal">Services</text>
<text x="1383.66" y="1546.40" font-size="28.83" textLength="189.78" lengthAdjust="spacingAndGlyphs" fill="#474747" font-weight="normal" font-style="normal" stroke="#474747" stroke-width="0.4">otel-collector</text>
<text x="1591.04" y="1546.40" font-size="29.14" textLength="83.48" lengthAdjust="spacingAndGlyphs" fill="#1e88e5" font-weight="normal" font-style="normal" stroke="#1e88e5" stroke-width="0.3">:14250</text>
<text x="1711.28" y="1546.40" font-size="29.14" textLength="85.50" lengthAdjust="spacingAndGlyphs" fill="#1e88e5" font-weight="normal" font-style="normal" stroke="#1e88e5" stroke-width="0.3">:14268</text>
<text x="1834.09" y="1546.40" font-size="29.14" textLength="64.26" lengthAdjust="spacingAndGlyphs" fill="#1e88e5" font-weight="normal" font-style="normal" stroke="#1e88e5" stroke-width="0.3">:4317</text>
<text x="1935.17" y="1546.40" font-size="29.14" textLength="67.68" lengthAdjust="spacingAndGlyphs" fill="#1e88e5" font-weight="normal" font-style="normal" stroke="#1e88e5" stroke-width="0.3">:4318</text>
<text x="2040.22" y="1546.40" font-size="29.14" textLength="58.85" lengthAdjust="spacingAndGlyphs" fill="#1e88e5" font-weight="normal" font-style="normal" stroke="#1e88e5" stroke-width="0.3">:9411</text>
<text x="1693.48" y="1654.60" font-size="30.76" textLength="451.85" lengthAdjust="spacingAndGlyphs" fill="#333333" font-weight="normal" font-style="normal" stroke="#333333" stroke-width="0.4">https://ni9ozje18ivwoy2ah70ynx...</text>
<text x="1743.27" y="1762.20" font-size="30.07" textLength="345.56" lengthAdjust="spacingAndGlyphs" fill="#1b5ba3" font-weight="normal" font-style="normal" stroke="#1b5ba3" stroke-width="0.6">admin.central-collector-</text>
<text x="1743.31" y="1806.20" font-size="29.93" textLength="258.59" lengthAdjust="spacingAndGlyphs" fill="#1b5ba3" font-weight="normal" font-style="normal" stroke="#1b5ba3" stroke-width="0.6">cluster.kubeconfig</text>
<text x="1744.04" y="1908.20" font-size="28.55" textLength="368.39" lengthAdjust="spacingAndGlyphs" fill="#2b2b2b" font-weight="normal" font-style="normal" stroke="#2b2b2b" stroke-width="0.2">4.8.0-250919/20250919.0001</text>
<text x="2244.44" y="924.20" font-size="23.31" textLength="184.11" lengthAdjust="spacingAndGlyphs" fill="#454545" font-weight="normal" font-style="normal">Cluster Profiles</text>
<text x="2325.70" y="982.40" font-size="20.71" textLength="486.16" lengthAdjust="spacingAndGlyphs" fill="#2f3338" font-weight="normal" font-style="normal" stroke="#2f3338" stroke-width="0.9">ADDON PROFILE CENTRAL-COLLECTOR-PROFILE</text>
<text x="2855.71" y="982.10" font-size="20.43" textLength="92.83" lengthAdjust="spacingAndGlyphs" fill="#101a2e" font-weight="normal" font-style="normal" stroke="#101a2e" stroke-width="0.5">PROJECT</text>
<text x="2323.17" y="1166.30" font-size="21.14" textLength="463.08" lengthAdjust="spacingAndGlyphs" fill="#2f2e36" font-weight="normal" font-style="normal" stroke="#2f2e36" stroke-width="0.9">INFRASTRUCTURE PROFILE DOCS-AWS-INFRA</text>
<text x="2830.40" y="1165.90" font-size="20.14" textLength="93.34" lengthAdjust="spacingAndGlyphs" fill="#101a2e" font-weight="normal" font-style="normal" stroke="#101a2e" stroke-width="0.5">PROJECT</text>
<text x="2416.61" y="1070.30" font-size="24.69" textLength="270.07" lengthAdjust="spacingAndGlyphs" fill="#2d2d2d" font-weight="normal" font-style="normal" stroke="#2d2d2d" stroke-width="0.35">Opentelemetry 0.132.4</text>
<text x="2417.80" y="1253.50" font-size="24.00" textLength="262.55" lengthAdjust="spacingAndGlyphs" fill="#2d2d2d" font-weight="normal" font-style="normal" stroke="#2d2d2d" stroke-width="0.35">Amazon EBS CSI 1.46.0</text>
<text x="2416.48" y="1358.00" font-size="23.72" textLength="153.89" lengthAdjust="spacingAndGlyphs" fill="#2d2d2d" font-weight="normal" font-style="normal" stroke="#2d2d2d" stroke-width="0.35">Calico 3.30.2</text>
<text x="2415.71" y="1462.50" font-size="25.24" textLength="497.70" lengthAdjust="spacingAndGlyphs" fill="#2d2d2d" font-weight="normal" font-style="normal" stroke="#2d2d2d" stroke-width="0.35">Palette eXtended Kubernetes (PXK) 1.32.8</text>
<text x="2415.84" y="1565.60" font-size="24.14" textLength="240.74" lengthAdjust="spacingAndGlyphs" fill="#2d2d2d" font-weight="normal" font-style="normal" stroke="#2d2d2d" stroke-width="0.35">Ubuntu (AWS) 22.04</text>
  </svg>
</div>
</body></html>
